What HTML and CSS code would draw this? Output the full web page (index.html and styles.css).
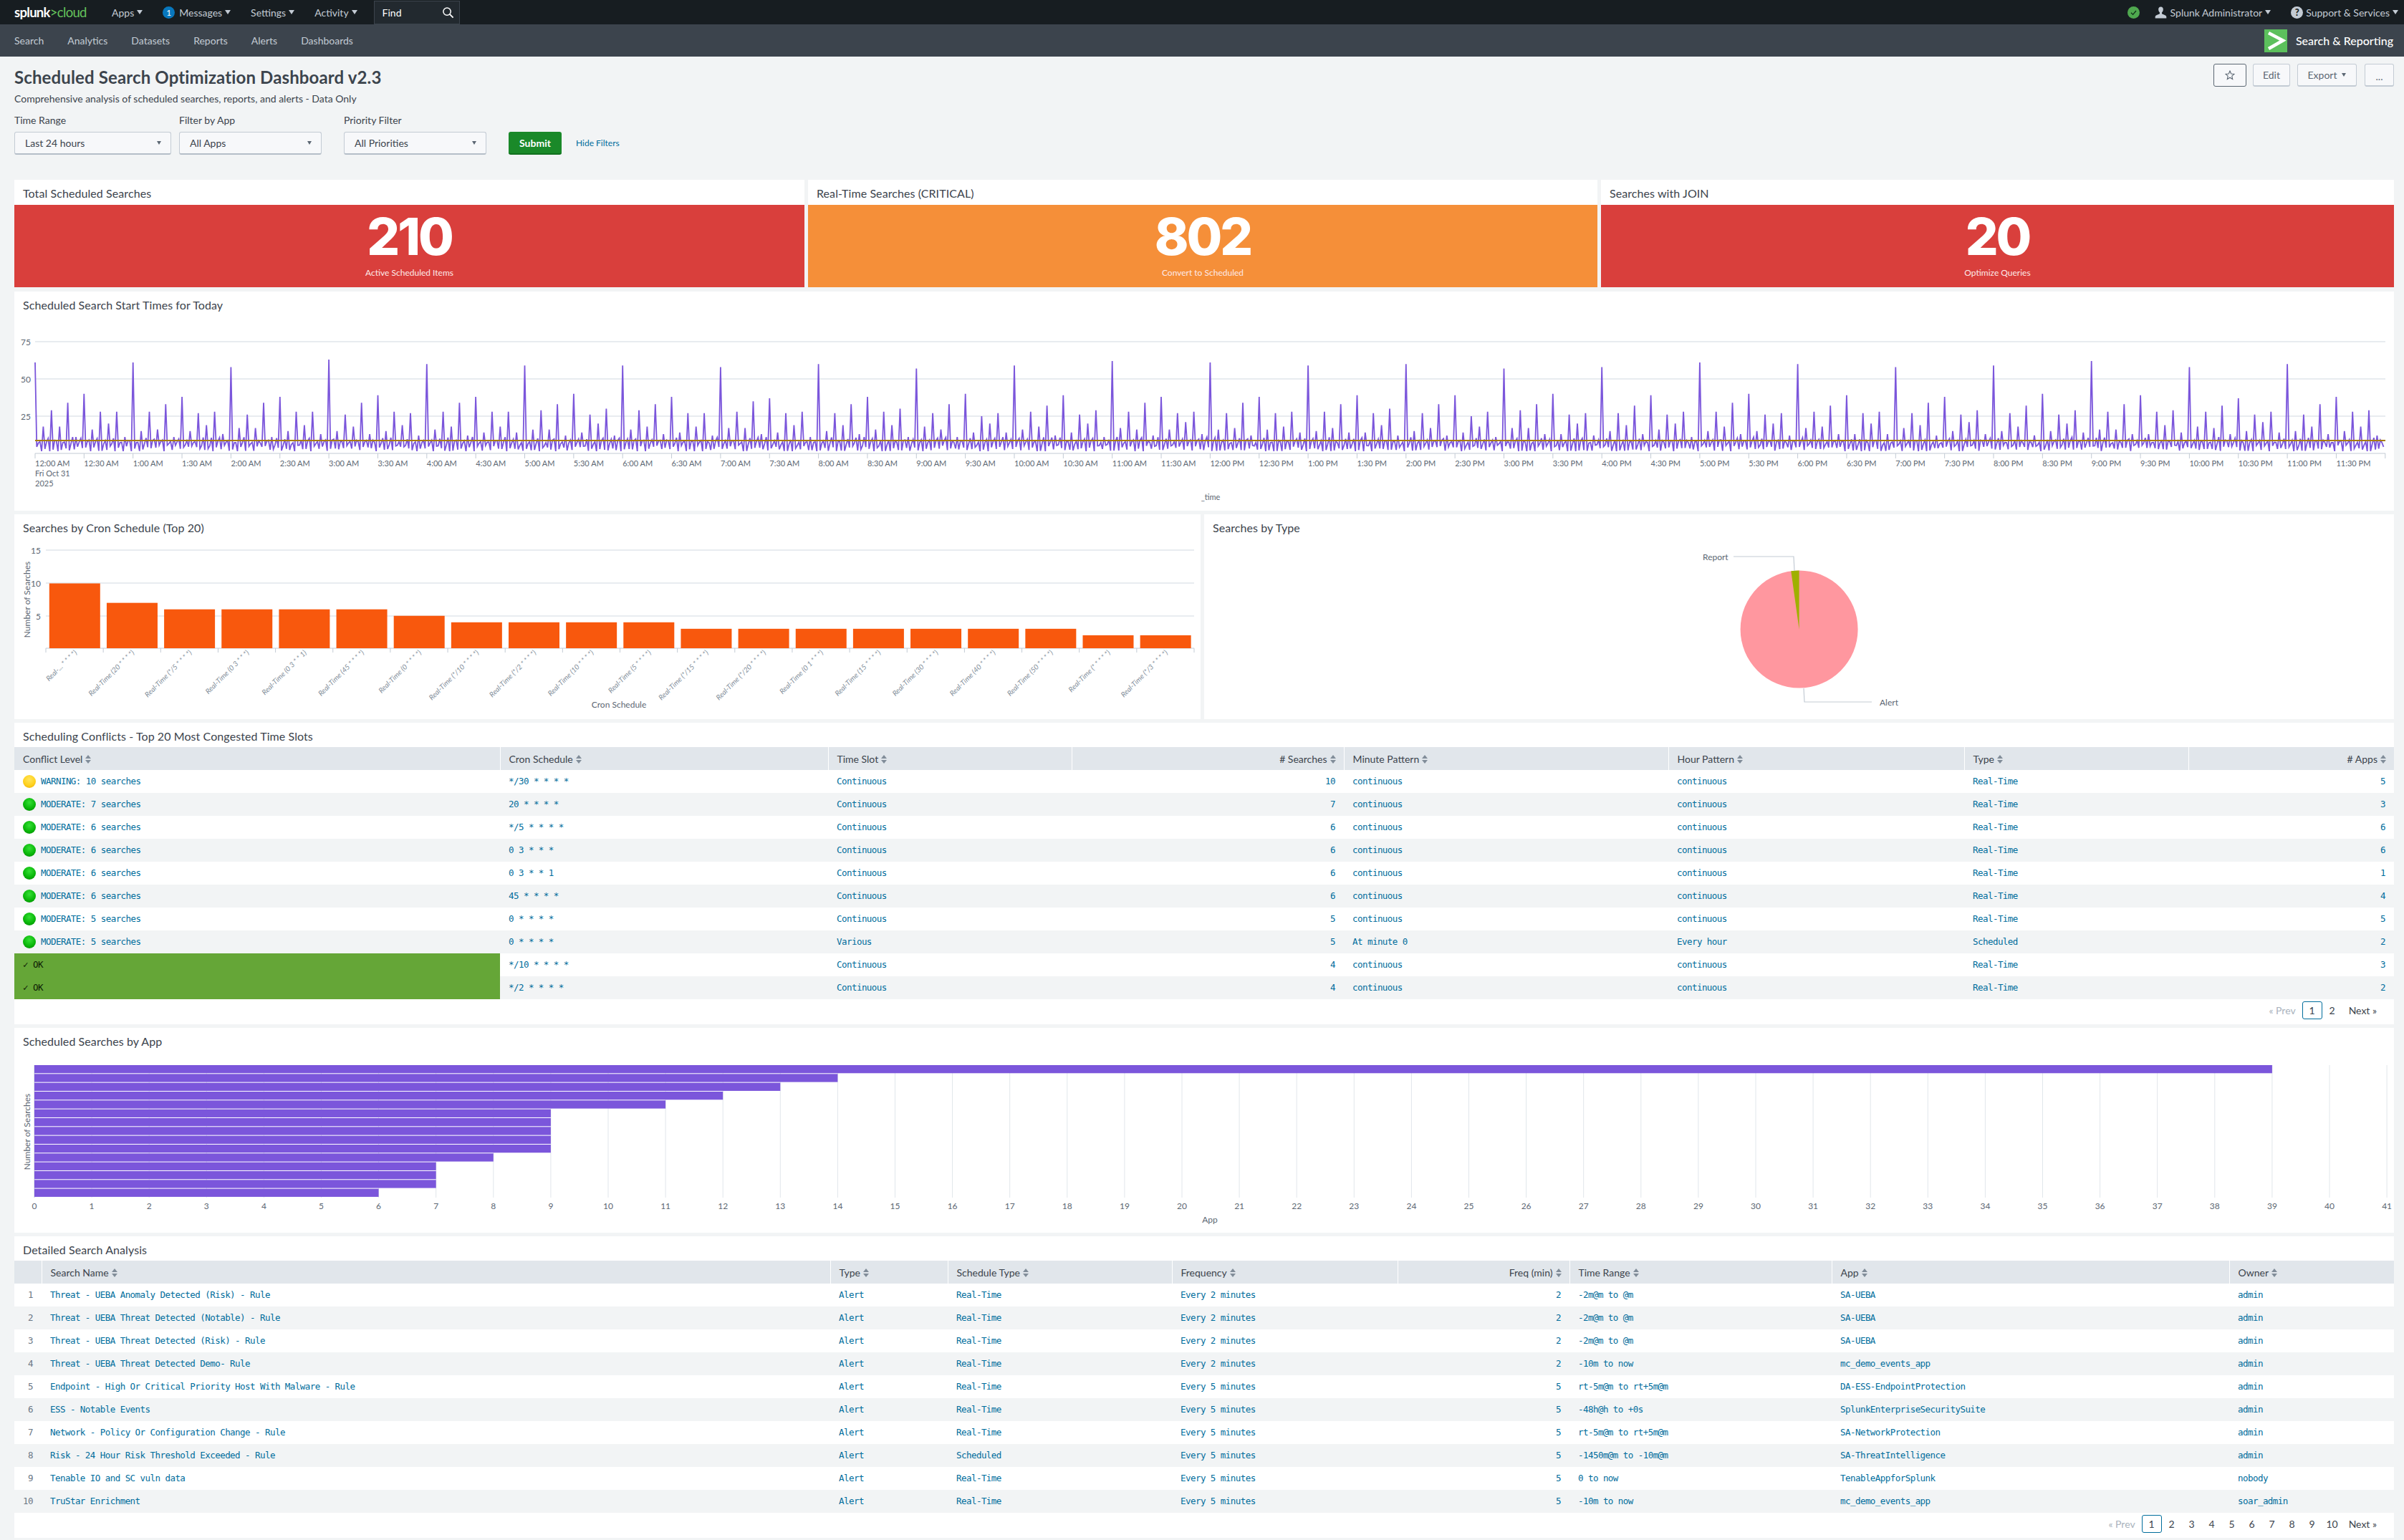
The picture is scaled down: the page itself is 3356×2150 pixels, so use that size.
FILE: index.html
```html
<!DOCTYPE html>
<html lang="en">
<head>
<meta charset="utf-8">
<title>Scheduled Search Optimization Dashboard v2.3</title>
<link rel="stylesheet" href="styles.css">
</head>
<body>
<header class="topbar">
  <div class="logo">splunk<span class="logo-green">&gt;cloud</span></div>
  <nav class="topnav">
    <a class="tn">Apps<i class="caret"></i></a>
    <a class="tn"><span class="badge">1</span>Messages<i class="caret"></i></a>
    <a class="tn">Settings<i class="caret"></i></a>
    <a class="tn">Activity<i class="caret"></i></a>
  </nav>
  <div class="find">Find
    <svg class="find-icon" viewBox="0 0 18 18"><circle cx="7.5" cy="7.5" r="5.5" fill="none" stroke="#fff" stroke-width="1.6"/><path d="M11.5 11.5 L16.5 16.5" stroke="#fff" stroke-width="2"/></svg>
  </div>
  <div class="top-right">
    <svg class="status" viewBox="0 0 17 17"><circle cx="8.5" cy="8.5" r="8.5" fill="#4fa84f"/><path d="M5 8.8 L7.6 11.4 L12 6" fill="none" stroke="#10301a" stroke-width="1.3"/></svg>
    <a class="tn tn-user"><svg class="uicon" viewBox="0 0 17 17"><path d="M8.5 0.5c2.4 0 3.6 1.9 3.3 4.2-.2 1.6-1 3-1.8 3.7v1.6c0 .8 5.6 1.7 6.3 4.2v2.3H.7v-2.3c.7-2.5 6.3-3.4 6.3-4.2V8.400c-.8-.7-1.600-2.100-1.800-3.700C4.900 2.400 6.100.5 8.500.5z" fill="#c3cbd4"/></svg>Splunk Administrator<i class="caret"></i></a>
    <a class="tn tn-help"><span class="help">?</span>Support &amp; Services<i class="caret"></i></a>
  </div>
</header>

<nav class="subnav">
  <a>Search</a><a>Analytics</a><a>Datasets</a><a>Reports</a><a>Alerts</a><a>Dashboards</a>
  <div class="app-brand">
    <svg class="app-logo" viewBox="0 0 32 32"><rect width="32" height="32" fill="#5cc05c"/><path d="M6 5 L26 15.500 L6 27" fill="none" stroke="#fff" stroke-width="4.500"/></svg>
    <span>Search &amp; Reporting</span>
  </div>
</nav>

<main class="page">
  <section class="head">
    <div class="head-left">
      <h1 class="title">Scheduled Search Optimization Dashboard v2.3</h1>
      <p class="subtitle">Comprehensive analysis of scheduled searches, reports, and alerts - Data Only</p>
      <form class="filters">
        <div class="field f-time"><label>Time Range</label><div class="select">Last 24 hours<i class="caret dark"></i></div></div>
        <div class="field f-app"><label>Filter by App</label><div class="select">All Apps<i class="caret dark"></i></div></div>
        <div class="field f-pri"><label>Priority Filter</label><div class="select">All Priorities<i class="caret dark"></i></div></div>
        <div class="btn-submit">Submit</div>
        <a class="hide-filters">Hide Filters</a>
      </form>
    </div>
    <div class="actions">
      <div class="btn btn-star"><svg class="star" viewBox="0 0 14 14"><path d="M7 1 L8.700 5 L13 5.400 L9.800 8.200 L10.700 12.500 L7 10.200 L3.300 12.500 L4.200 8.200 L1 5.400 L5.300 5 Z" fill="none" stroke="#5c6773" stroke-width="1.100"/></svg></div>
      <div class="btn btn-edit">Edit</div>
      <div class="btn btn-export">Export<i class="caret dark"></i></div>
      <div class="btn btn-more">...</div>
    </div>
  </section>

  <section class="stats">
    <div class="panel">
      <h2 class="ptitle ptitle-stat">Total Scheduled Searches</h2>
      <div class="stat red"><div class="num">210</div><div class="under">Active Scheduled Items</div></div>
    </div>
    <div class="panel">
      <h2 class="ptitle ptitle-stat">Real-Time Searches (CRITICAL)</h2>
      <div class="stat orange"><div class="num">802</div><div class="under">Convert to Scheduled</div></div>
    </div>
    <div class="panel">
      <h2 class="ptitle ptitle-stat">Searches with JOIN</h2>
      <div class="stat red"><div class="num">20</div><div class="under">Optimize Queries</div></div>
    </div>
  </section>

  <section class="panel">
    <h2 class="ptitle">Scheduled Search Start Times for Today</h2>
    <svg id="timeChart" class="chart chart-time" viewBox="20 441 3322 272"></svg>
  </section>

  <section class="split">
    <div class="panel">
      <h2 class="ptitle">Searches by Cron Schedule (Top 20)</h2>
      <svg id="cronChart" class="chart chart-cron" viewBox="20 752 1656 252"></svg>
    </div>
    <div class="panel">
      <h2 class="ptitle">Searches by Type</h2>
      <svg id="pieChart" class="chart chart-pie" viewBox="1681 752 1661 252"></svg>
    </div>
  </section>

  <section class="panel">
    <h2 class="ptitle">Scheduling Conflicts - Top 20 Most Congested Time Slots</h2>
    <table class="grid grid-a">
      <colgroup><col class="a1"><col class="a2"><col class="a3"><col class="a4"><col class="a5"><col class="a6"><col class="a7"><col class="a8"></colgroup>
      <thead><tr>
        <th>Conflict Level<i class="sort"></i></th><th>Cron Schedule<i class="sort"></i></th><th>Time Slot<i class="sort"></i></th><th class="r"># Searches<i class="sort"></i></th><th>Minute Pattern<i class="sort"></i></th><th>Hour Pattern<i class="sort"></i></th><th>Type<i class="sort"></i></th><th class="r"># Apps<i class="sort"></i></th>
      </tr></thead>
      <tbody>
        <tr><td><i class="dot yellow"></i>WARNING: 10 searches</td><td>*/30 * * * *</td><td>Continuous</td><td class="r">10</td><td>continuous</td><td>continuous</td><td>Real-Time</td><td class="r">5</td></tr>
        <tr><td><i class="dot green"></i>MODERATE: 7 searches</td><td>20 * * * *</td><td>Continuous</td><td class="r">7</td><td>continuous</td><td>continuous</td><td>Real-Time</td><td class="r">3</td></tr>
        <tr><td><i class="dot green"></i>MODERATE: 6 searches</td><td>*/5 * * * *</td><td>Continuous</td><td class="r">6</td><td>continuous</td><td>continuous</td><td>Real-Time</td><td class="r">6</td></tr>
        <tr><td><i class="dot green"></i>MODERATE: 6 searches</td><td>0 3 * * *</td><td>Continuous</td><td class="r">6</td><td>continuous</td><td>continuous</td><td>Real-Time</td><td class="r">6</td></tr>
        <tr><td><i class="dot green"></i>MODERATE: 6 searches</td><td>0 3 * * 1</td><td>Continuous</td><td class="r">6</td><td>continuous</td><td>continuous</td><td>Real-Time</td><td class="r">1</td></tr>
        <tr><td><i class="dot green"></i>MODERATE: 6 searches</td><td>45 * * * *</td><td>Continuous</td><td class="r">6</td><td>continuous</td><td>continuous</td><td>Real-Time</td><td class="r">4</td></tr>
        <tr><td><i class="dot green"></i>MODERATE: 5 searches</td><td>0 * * * *</td><td>Continuous</td><td class="r">5</td><td>continuous</td><td>continuous</td><td>Real-Time</td><td class="r">5</td></tr>
        <tr><td><i class="dot green"></i>MODERATE: 5 searches</td><td>0 * * * *</td><td>Various</td><td class="r">5</td><td>At minute 0</td><td>Every hour</td><td>Scheduled</td><td class="r">2</td></tr>
        <tr><td class="ok">✓ OK</td><td>*/10 * * * *</td><td>Continuous</td><td class="r">4</td><td>continuous</td><td>continuous</td><td>Real-Time</td><td class="r">3</td></tr>
        <tr><td class="ok">✓ OK</td><td>*/2 * * * *</td><td>Continuous</td><td class="r">4</td><td>continuous</td><td>continuous</td><td>Real-Time</td><td class="r">2</td></tr>
      </tbody>
    </table>
    <div class="pager"><span class="prev">« Prev</span><span class="pg on">1</span><span class="pg">2</span><span class="next">Next »</span></div>
  </section>

  <section class="panel">
    <h2 class="ptitle">Scheduled Searches by App</h2>
    <svg id="appChart" class="chart chart-app" viewBox="20 1469 3322 252"></svg>
  </section>

  <section class="panel">
    <h2 class="ptitle">Detailed Search Analysis</h2>
    <table class="grid grid-b">
      <colgroup><col class="b0"><col class="b1"><col class="b2"><col class="b3"><col class="b4"><col class="b5"><col class="b6"><col class="b7"><col class="b8"></colgroup>
      <thead><tr>
        <th></th><th>Search Name<i class="sort"></i></th><th>Type<i class="sort"></i></th><th>Schedule Type<i class="sort"></i></th><th>Frequency<i class="sort"></i></th><th class="r">Freq (min)<i class="sort"></i></th><th>Time Range<i class="sort"></i></th><th>App<i class="sort"></i></th><th>Owner<i class="sort"></i></th>
      </tr></thead>
      <tbody>
        <tr><td class="idx">1</td><td>Threat - UEBA Anomaly Detected (Risk) - Rule</td><td>Alert</td><td>Real-Time</td><td>Every 2 minutes</td><td class="r">2</td><td>-2m@m to @m</td><td>SA-UEBA</td><td>admin</td></tr>
        <tr><td class="idx">2</td><td>Threat - UEBA Threat Detected (Notable) - Rule</td><td>Alert</td><td>Real-Time</td><td>Every 2 minutes</td><td class="r">2</td><td>-2m@m to @m</td><td>SA-UEBA</td><td>admin</td></tr>
        <tr><td class="idx">3</td><td>Threat - UEBA Threat Detected (Risk) - Rule</td><td>Alert</td><td>Real-Time</td><td>Every 2 minutes</td><td class="r">2</td><td>-2m@m to @m</td><td>SA-UEBA</td><td>admin</td></tr>
        <tr><td class="idx">4</td><td>Threat - UEBA Threat Detected Demo- Rule</td><td>Alert</td><td>Real-Time</td><td>Every 2 minutes</td><td class="r">2</td><td>-10m to now</td><td>mc_demo_events_app</td><td>admin</td></tr>
        <tr><td class="idx">5</td><td>Endpoint - High Or Critical Priority Host With Malware - Rule</td><td>Alert</td><td>Real-Time</td><td>Every 5 minutes</td><td class="r">5</td><td>rt-5m@m to rt+5m@m</td><td>DA-ESS-EndpointProtection</td><td>admin</td></tr>
        <tr><td class="idx">6</td><td>ESS - Notable Events</td><td>Alert</td><td>Real-Time</td><td>Every 5 minutes</td><td class="r">5</td><td>-48h@h to +0s</td><td>SplunkEnterpriseSecuritySuite</td><td>admin</td></tr>
        <tr><td class="idx">7</td><td>Network - Policy Or Configuration Change - Rule</td><td>Alert</td><td>Real-Time</td><td>Every 5 minutes</td><td class="r">5</td><td>rt-5m@m to rt+5m@m</td><td>SA-NetworkProtection</td><td>admin</td></tr>
        <tr><td class="idx">8</td><td>Risk - 24 Hour Risk Threshold Exceeded - Rule</td><td>Alert</td><td>Scheduled</td><td>Every 5 minutes</td><td class="r">5</td><td>-1450m@m to -10m@m</td><td>SA-ThreatIntelligence</td><td>admin</td></tr>
        <tr><td class="idx">9</td><td>Tenable IO and SC vuln data</td><td>Alert</td><td>Real-Time</td><td>Every 5 minutes</td><td class="r">5</td><td>0 to now</td><td>TenableAppforSplunk</td><td>nobody</td></tr>
        <tr><td class="idx">10</td><td>TruStar Enrichment</td><td>Alert</td><td>Real-Time</td><td>Every 5 minutes</td><td class="r">5</td><td>-10m to now</td><td>mc_demo_events_app</td><td>soar_admin</td></tr>
      </tbody>
    </table>
    <div class="pager"><span class="prev">« Prev</span><span class="pg on">1</span><span class="pg">2</span><span class="pg">3</span><span class="pg">4</span><span class="pg">5</span><span class="pg">6</span><span class="pg">7</span><span class="pg">8</span><span class="pg">9</span><span class="pg">10</span><span class="next">Next »</span></div>
  </section>
</main>
<script src="script.js"></script>
</body>
</html>
```

FILE: styles.css
```css
* { box-sizing: border-box; }
html, body { margin: 0; padding: 0; }
body { background: #f2f4f5; color: #3c444d; font-family: Lato, "Liberation Sans", sans-serif; font-size: 14px; width: 3356px; height: 2150px; overflow: hidden; }
a { color: inherit; }

.topbar { height: 34px; background: #171d21; color: #c3cbd4; display: flex; align-items: center; padding-left: 20px; font-size: 14px; }
.logo { font-size: 18.500px; color: #fff; width: 101px; font-weight: 700; letter-spacing: -0.7px; white-space: nowrap; margin-right: 35px; }
.logo-green { color: #65c35c; font-weight: 400; }
.topnav { display: flex; gap: 28px; margin-right: 23px; }
.tn { display: inline-flex; align-items: center; white-space: nowrap; }
.caret { display: inline-block; width: 0; height: 0; border-left: 4px solid transparent; border-right: 4px solid transparent; border-top: 6px solid #c3cbd4; margin-left: 4px; }
.caret.dark { border-top-color: #5c6773; border-left-width: 3.500px; border-right-width: 3.500px; border-top-width: 5px; }
.badge { width: 17px; height: 17px; border-radius: 50%; background: #0877bd; color: #fff; font-size: 12px; text-align: center; line-height: 17px; margin-right: 6px; }
.find { width: 120px; height: 33px; border: 1px solid #3c444d; background: #22292f; color: #fff; display: flex; align-items: center; justify-content: space-between; padding: 0 7px 0 11px; align-self: flex-start; margin-top: 1px; }
.find-icon { width: 17px; height: 17px; }
.top-right { margin-left: auto; display: flex; align-items: center; padding-right: 8px; }
.status { width: 17px; height: 17px; margin-right: 21px; }
.uicon { width: 17px; height: 17px; margin-right: 5px; }
.tn-user { margin-right: 28px; }
.help { width: 17px; height: 17px; border-radius: 50%; background: #c3cbd4; color: #171d21; font-size: 13px; font-weight: 900; text-align: center; line-height: 17px; margin-right: 4px; }

.subnav { height: 45px; background: #3c444d; color: #c3cbd4; display: flex; align-items: center; gap: 33px; padding: 0 15px 0 20px; font-size: 14px; }
.app-brand { margin-left: auto; display: flex; align-items: center; gap: 12px; color: #fff; font-size: 16px; font-weight: 500; white-space: nowrap; }
.app-logo { width: 32px; height: 32px; }

.page { padding: 0 14px 0 20px; display: flex; flex-direction: column; gap: 5px; }
.head { display: flex; justify-content: space-between; height: 167px; padding-top: 10px; }
.title { margin: 0; font-size: 24px; line-height: 38px; font-weight: 700; color: #3c444d; letter-spacing: 0.13px; }
.subtitle { margin: 1px 0 0; line-height: 20px; font-size: 14px; }
.filters { display: flex; align-items: flex-end; margin-top: 11px; }
.field label { display: block; line-height: 18px; margin-bottom: 7px; }
.f-time { width: 219px; margin-right: 11px; }
.f-app { width: 199px; margin-right: 31px; }
.f-pri { width: 199px; margin-right: 31px; }
.select { height: 32px; background: #f7f8fa; border: 1px solid #c3cbd4; border-bottom: 2px solid #b5bec8; border-radius: 3px; display: flex; align-items: center; justify-content: space-between; padding: 0 13px 0 14px; }
.btn-submit { width: 74px; height: 32px; background: #1a8929; border-bottom: 2px solid #12701f; color: #fff; font-weight: 700; border-radius: 3px; display: flex; align-items: center; justify-content: center; margin-right: 20px; }
.hide-filters { color: #006d9c; font-size: 12px; line-height: 32px; }
.actions { display: flex; height: 32px; }
.btn { height: 32px; background: #f7f8fa; border: 1px solid #c3cbd4; border-bottom-width: 2px; border-radius: 3px; display: flex; align-items: center; justify-content: center; color: #5c6773; }
.btn-star { width: 46px; margin-right: 9px; border-color: #5c6773; border-bottom-width: 1px; }
.star { width: 14px; height: 14px; }
.btn-edit { width: 52px; margin-right: 10px; }
.btn-export { width: 83px; margin-right: 11px; }
.btn-export .caret { margin-left: 7px; }
.btn-more { width: 41px; padding-top: 4px; }

.panel { background: #fff; }
.ptitle { margin: 0; height: 34px; padding: 7px 12px 0; font-size: 16px; line-height: 24px; font-weight: 400; color: #3c444d; letter-spacing: 0.08px; }
.ptitle-stat { height: 35px; }
.stats { display: grid; grid-template-columns: 1103px 1102px 1fr; gap: 5px; padding-bottom: 1px; }
.stat { height: 115px; color: #fff; text-align: center; padding-top: 8px; }
.red { background: #d93f3c; }
.orange { background: #f58f39; }
.num { font-family: Inter, Lato, sans-serif; font-size: 72px; font-weight: 800; line-height: 72px; letter-spacing: -3px; }
.under { font-size: 12px; line-height: 16px; margin-top: 7px; color: #fde9e8; }

.split { display: grid; grid-template-columns: 1656px 1fr; gap: 5px; }
.chart { display: block; width: 100%; }
.chart-time { height: 272px; }
.chart-cron, .chart-pie, .chart-app { height: 252px; }
.ax { font-family: Lato, sans-serif; font-size: 11px; fill: #5c6773; }
.axy { font-family: Lato, sans-serif; font-size: 12px; fill: #5c6773; }
.axr { font-family: Lato, sans-serif; font-size: 10px; font-style: italic; fill: #818d99; }

.grid { width: 100%; border-collapse: collapse; table-layout: fixed; }
.grid th { height: 32px; background: #e1e6eb; font-weight: 400; text-align: left; padding: 0 12px; border-left: 1px solid #fff; white-space: nowrap; color: #3c444d; }
.grid th:first-child { border-left: 0; }
.grid td { height: 32px; padding: 0 12px 1px; font-family: "DejaVu Sans Mono", "Liberation Mono", monospace; font-size: 12.500px; letter-spacing: -0.55px; color: #006d9c; white-space: nowrap; }
.grid tbody tr:nth-child(even) td { background: #f2f4f5; }
.grid .r { text-align: right; }
.grid td.ok, .grid tbody tr:nth-child(even) td.ok { background: #65a637; color: #0c1a04; }
.grid td.idx { color: #6b7785; text-align: right; padding: 0 12px 1px 0; }
.grid-a .a1 { width: 678px; } .grid-a .a2 { width: 458px; } .grid-a .a3 { width: 340px; } .grid-a .a4 { width: 380px; }
.grid-a .a5 { width: 453px; } .grid-a .a6 { width: 413px; } .grid-a .a7 { width: 313px; } .grid-a .a8 { width: 287px; }
.grid-b .b0 { width: 38px; } .grid-b .b1 { width: 1101px; } .grid-b .b2 { width: 164px; } .grid-b .b3 { width: 313px; }
.grid-b .b4 { width: 315px; } .grid-b .b5 { width: 240px; } .grid-b .b6 { width: 366px; } .grid-b .b7 { width: 555px; } .grid-b .b8 { width: 230px; }
.sort { display: inline-block; position: relative; width: 8px; height: 12px; margin-left: 4px; vertical-align: -1px; }
.sort::before, .sort::after { content: ""; position: absolute; left: 0; width: 0; height: 0; border-left: 4px solid transparent; border-right: 4px solid transparent; }
.sort::before { top: 0; border-bottom: 5px solid #818d99; }
.sort::after { bottom: 0; border-top: 5px solid #818d99; }
.grid th.r .sort { margin-right: -1px; }
.dot { display: inline-block; width: 18px; height: 18px; border-radius: 50%; margin-right: 7px; vertical-align: middle; }
.yellow { background: radial-gradient(circle at 50% 35%, #ffe45c 0%, #ffd21f 55%, #e8a800 100%); }
.green { background: radial-gradient(circle at 50% 35%, #35e035 0%, #0ab80a 55%, #058005 100%); }

.pager { height: 35px; display: flex; justify-content: flex-end; align-items: flex-start; padding: 3px 24px 0 0; color: #3c444d; }
.prev { color: #a9b3bd; margin-right: 9px; line-height: 25px; }
.next { margin-left: 9px; line-height: 25px; }
.pg { min-width: 28px; height: 25px; line-height: 23px; text-align: center; border: 1px solid transparent; border-radius: 3px; }
.pg.on { border-color: #006d9c; }
```

FILE: script.js
```js
(function () {
  var NS = 'http://www.w3.org/2000/svg';
  function el(parent, name, attrs, text) {
    var n = document.createElementNS(NS, name);
    for (var k in attrs) n.setAttribute(k, attrs[k]);
    if (text !== undefined) n.textContent = text;
    parent.appendChild(n);
    return n;
  }
  var seed = 17;
  function rnd() { seed = (seed * 1103515245 + 12345) & 0x7fffffff; return seed / 0x7fffffff; }

  /* Start-times line chart */
  var t = document.getElementById('timeChart');
  var X0 = 49, STEP = 68.35 / 30;
  function ty(v) { return 633 - v * 2.08; }
  [[75], [50], [25]].forEach(function (a) {
    el(t, 'line', { x1: X0, x2: 3330, y1: ty(a[0]), y2: ty(a[0]), stroke: '#e1e6eb', 'stroke-width': 1.5 });
    el(t, 'text', { x: 43, y: ty(a[0]) + 5, 'text-anchor': 'end', 'class': 'axy' }, a[0]);
  });
  el(t, 'line', { x1: X0, x2: 3330, y1: 633, y2: 633, stroke: '#c3cbd4', 'stroke-width': 1 });
  for (var i = 0; i <= 48; i++) {
    var x = X0 + i * 68.35;
    el(t, 'line', { x1: x, x2: x, y1: 633, y2: 640, stroke: '#c3cbd4' });
    if (i === 48) break;
    var h = Math.floor(i / 2) % 12 || 12;
    var label = h + ':' + (i % 2 ? '30' : '00') + (i < 24 ? ' AM' : ' PM');
    el(t, 'text', { x: x, y: 651, 'class': 'ax' }, label);
  }
  el(t, 'text', { x: X0, y: 665, 'class': 'ax' }, 'Fri Oct 31');
  el(t, 'text', { x: X0, y: 679, 'class': 'ax' }, '2025');
  el(t, 'text', { x: 1690, y: 698, 'text-anchor': 'middle', 'class': 'ax' }, '_time');

  var tops = [61, 61, 58, 63, 60, 59, 59, 58, 60, 57, 59, 62, 61, 59, 60, 57, 58, 61, 60, 58, 59, 62, 58, 60];
  var fives = [0, 16, 27, 17, 33, 12, 38, 14, 26, 19, 28, 12];
  var mins = [0, 3.5, 7, 9, 2.5];
  var d = [];
  for (var m = 0; m < 1440; m++) {
    var q = m % 5, v;
    if (q === 0) {
      var f = (m / 5) % 12;
      v = f === 0 ? tops[m / 60] : fives[f] + Math.round(rnd() * 3 - 1);
    } else {
      v = mins[q] + (rnd() * 4 - 2);
      if (v < 1.5) v = 1.5;
    }
    d.push((m ? 'L' : 'M') + (X0 + m * STEP).toFixed(1) + ' ' + ty(v).toFixed(1));
  }
  el(t, 'path', { d: d.join(''), fill: 'none', stroke: '#7b56db', 'stroke-width': 1.8 });
  el(t, 'line', { x1: X0, x2: 3330, y1: 615, y2: 615, stroke: '#a67c00', 'stroke-width': 2 });

  /* Cron column chart */
  var c = document.getElementById('cronChart');
  [[15, 768], [10, 814], [5, 860]].forEach(function (a) {
    el(c, 'line', { x1: 64, x2: 1667, y1: a[1], y2: a[1], stroke: '#e1e6eb', 'stroke-width': 1.5 });
    el(c, 'text', { x: 57, y: a[1] + 5, 'text-anchor': 'end', 'class': 'axy' }, a[0]);
  });
  el(c, 'line', { x1: 64, x2: 1667, y1: 905, y2: 905, stroke: '#c3cbd4' });
  el(c, 'text', { x: 42, y: 837, 'text-anchor': 'middle', transform: 'rotate(-90 42 837)', 'class': 'axy' }, 'Number of Searches');
  el(c, 'text', { x: 864, y: 988, 'text-anchor': 'middle', 'class': 'axy' }, 'Cron Schedule');
  var vals = [10, 7, 6, 6, 6, 6, 5, 4, 4, 4, 4, 3, 3, 3, 3, 3, 3, 3, 2, 2];
  var labs = ['Real-... * * * *)', '(20 * * * *)', '(*/5 * * * *)', '(0 3 * * *)', '(0 3 * * 1)', '(45 * * * *)', '(0 * * * *)', '(*/10 * * * *)', '(*/2 * * * *)', '(10 * * * *)', '(5 * * * *)', '(*/15 * * * *)', '(*/20 * * * *)', '(0 1 * * *)', '(15 * * * *)', '(30 * * * *)', '(40 * * * *)', '(50 * * * *)', '(* * * * *)', '(*/3 * * * *)'];
  for (var b = 0; b < 20; b++) {
    var bx = 64 + b * 80.15;
    var bh = vals[b] * 9.05;
    el(c, 'rect', { x: bx + 4.8, y: 905 - bh, width: 71, height: bh, fill: '#f8580d' });
    el(c, 'line', { x1: bx, x2: bx, y1: 905, y2: 911, stroke: '#c3cbd4' });
    var lx = bx + 44, ly = 912;
    var s = b === 0 ? labs[0] : 'Real-Time ' + labs[b];
    el(c, 'text', { x: lx, y: ly, 'text-anchor': 'end', transform: 'rotate(-45 ' + lx + ' ' + ly + ')', 'class': 'axr' }, s);
  }
  el(c, 'line', { x1: 1667, x2: 1667, y1: 905, y2: 911, stroke: '#c3cbd4' });

  /* Pie chart */
  var p = document.getElementById('pieChart');
  var cx = 2511.6, cy = 878.5, r = 82;
  el(p, 'circle', { cx: cx, cy: cy, r: r, fill: '#ff979f' });
  el(p, 'path', { d: 'M' + cx + ' ' + cy + 'L' + (cx - 11.3) + ' ' + (cy - 81.2) + 'A82 82 0 0 1 ' + cx + ' ' + (cy - r) + 'Z', fill: '#9fb000' });
  el(p, 'path', { d: 'M2420 777H2504L2505 797', fill: 'none', stroke: '#c3cbd4', 'stroke-width': 1.2 });
  el(p, 'path', { d: 'M2518 961L2519 980H2613', fill: 'none', stroke: '#c3cbd4', 'stroke-width': 1.2 });
  el(p, 'text', { x: 2377, y: 782, 'class': 'axy' }, 'Report');
  el(p, 'text', { x: 2624, y: 985, 'class': 'axy' }, 'Alert');

  /* App bar chart */
  var a = document.getElementById('appChart');
  for (var g = 0; g <= 41; g++) {
    var gx = 48 + g * 80.1;
    el(a, 'line', { x1: gx, x2: gx, y1: 1487, y2: 1672, stroke: g ? '#e1e6eb' : '#c3cbd4' });
    el(a, 'text', { x: gx, y: 1688, 'text-anchor': 'middle', 'class': 'axy' }, g);
  }
  var apps = [39, 14, 13, 12, 11, 9, 9, 9, 9, 9, 8, 7, 7, 7, 6];
  apps.forEach(function (n, i) {
    el(a, 'rect', { x: 48, y: 1487 + i * 12.33, width: n * 80.1, height: 11.3, fill: '#7b56db' });
  });
  el(a, 'text', { x: 42, y: 1580, 'text-anchor': 'middle', transform: 'rotate(-90 42 1580)', 'class': 'axy' }, 'Number of Searches');
  el(a, 'text', { x: 1689, y: 1707, 'text-anchor': 'middle', 'class': 'axy' }, 'App');
})();
```
